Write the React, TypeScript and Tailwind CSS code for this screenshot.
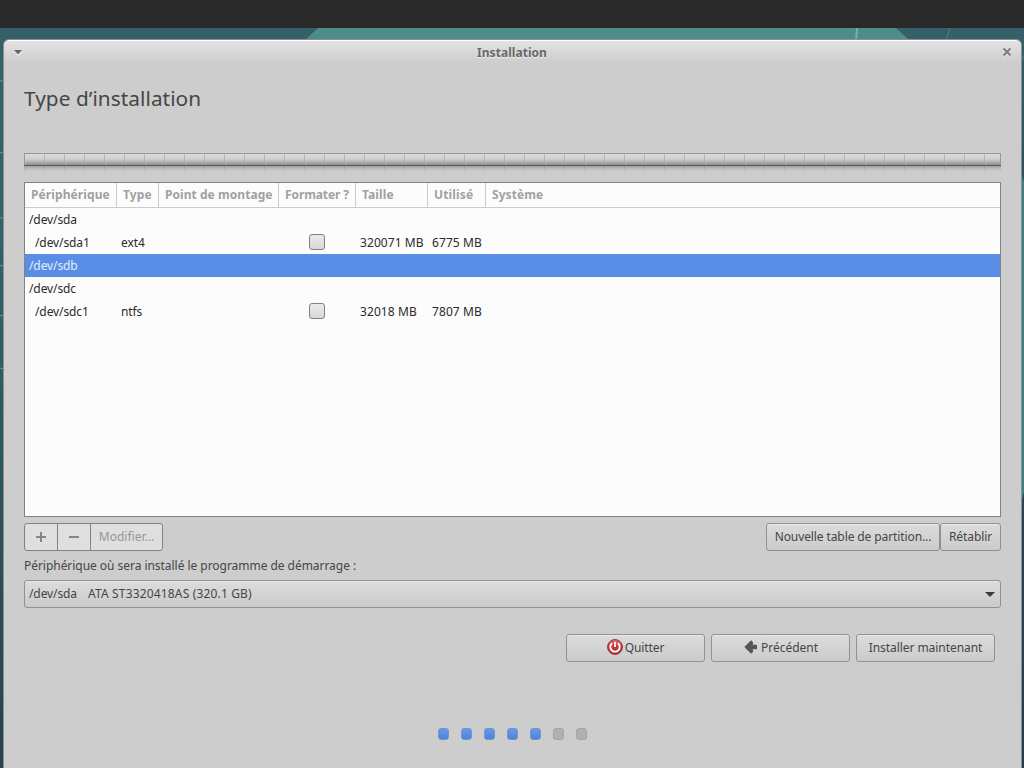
import React from 'react';

const columns = [
  { label: 'Périphérique', width: 'w-[92px]', tracking: 'tracking-[0.1px]' },
  { label: 'Type', width: 'w-[42px]', tracking: 'tracking-[0.1px]' },
  { label: 'Point de montage', width: 'w-[120px]', tracking: 'tracking-[0.05px]' },
  { label: 'Formater ?', width: 'w-[77px]', tracking: 'tracking-[-0.1px]' },
  { label: 'Taille', width: 'w-[72px]', tracking: 'tracking-[0.1px]' },
  { label: 'Utilisé', width: 'w-[58px]', tracking: 'tracking-[0.15px]' },
];

const rows = [
  { device: '/dev/sda' },
  { device: '/dev/sda1', type: 'ext4', size: '320071 MB', used: '6775 MB' },
  { device: '/dev/sdb', selected: true },
  { device: '/dev/sdc' },
  { device: '/dev/sdc1', type: 'ntfs', size: '32018 MB', used: '7807 MB' },
];

const steps = [true, true, true, true, true, false, false];

const Wallpaper: React.FC = () => (
  <svg className="absolute inset-0" width="1024" height="768" viewBox="0 0 1024 768">
    <defs>
      <linearGradient id="sea" x1="0" y1="0" x2="0" y2="1">
        <stop offset="0" stopColor="#366069" />
        <stop offset="0.35" stopColor="#30616a" />
        <stop offset="1" stopColor="#27434c" />
      </linearGradient>
      <linearGradient id="edge" x1="0" y1="0" x2="0" y2="1">
        <stop offset="0" stopColor="#366069" />
        <stop offset="0.25" stopColor="#2c4d5a" />
        <stop offset="1" stopColor="#263f4e" />
      </linearGradient>
    </defs>
    <rect width="1024" height="768" fill="url(#sea)" />
    <rect x="1021" y="28" width="3" height="740" fill="url(#edge)" />
    <path d="M318 28H896L910 41H304Z" fill="#4e8c8a" />
    <path d="M857 28L856 41" stroke="#73b0ae" strokeWidth="2" />
    <path d="M950 28L946 41M1022 60L1024 55" stroke="#4f7f85" />
    <path d="M1022 175L1024 182V492L1022 500Z" fill="#408080" />
    <path d="M0 81H4M0 153L4 152M0 218H4M0 266L4 265M0 316L4 315M0 368L4 369" stroke="#6d9a9c" />
  </svg>
);

const buttonClass =
  'flex h-7 items-center justify-center rounded-[3px] border border-[#919191] bg-linear-to-b from-[#dcdcdc] to-[#cbcbcb] shadow-[inset_0_1px_0_#e9e9e9]';

const DeviceTable: React.FC = () => (
  <div className="mt-[9px] h-[335px] border border-[#828282] bg-[#fcfcfc]">
    <div className="flex h-[25px] border-b border-[#cbcbcb] font-bold text-[#a1a1a1]">
      {columns.map((col) => (
        <div
          key={col.label}
          className={`${col.width} ${col.tracking} shrink-0 border-r border-[#cbcbcb] pl-1.5 leading-6 whitespace-nowrap`}
        >
          {col.label}
        </div>
      ))}
      <div className="pl-1.5 leading-6 tracking-[0.08px]">Système</div>
    </div>
    {rows.map((row) => (
      <div
        key={row.device}
        className={`flex h-[23px] leading-[23px] whitespace-nowrap ${row.selected ? 'bg-[#5a8ee6] text-[#e4ecfb]' : 'text-[#2b2b2b]'}`}
      >
        <div className={`w-24 shrink-0 tracking-[-0.1px] ${row.type ? 'pl-2.5' : 'pl-1'}`}>{row.device}</div>
        <div className="w-[188px] shrink-0 tracking-[-0.1px]">{row.type}</div>
        <div className="flex w-[55px] shrink-0 items-center">
          {row.type && (
            <span className="mb-px size-4 rounded-[3px] border border-[#808080] bg-linear-to-b from-[#eaeaea] to-[#d8d8d8]" />
          )}
        </div>
        <div className="-ml-1 w-[72px] shrink-0 tracking-[0.08px]">{row.size}</div>
        <div className="tracking-[0.08px]">{row.used}</div>
      </div>
    ))}
  </div>
);

const App: React.FC = () => {
  return (
    <div className="relative h-[768px] w-[1024px] overflow-hidden font-['Noto_Sans',sans-serif] text-[12px] text-[#464646]">
      <Wallpaper />
      <div className="relative h-7 bg-[#292929]" />

      <div className="relative mt-[11px] ml-[3px] h-[740px] w-[1019px] rounded-t-[6px] border border-[#8c8f8f] bg-[#cdcdcd] shadow-[inset_0_1px_0_#fff]">
        <div className="mt-px flex h-[22px] items-center justify-between rounded-t-[5px] bg-linear-to-b from-[#e3e3e3] to-[#cdcdcd] pr-[9px] pl-2.5">
          <svg className="mt-0.5" width="8" height="6" viewBox="0 0 8 6">
            <path d="M0 1H8L4 6Z" fill="#f4f4f4" />
            <path d="M0 0H8L4 4.5Z" fill="#666" />
          </svg>
          <span className="pt-0.5 font-bold tracking-[0.05px] text-[#686868] [text-shadow:0_1px_0_#eee]">Installation</span>
          <svg width="10" height="10" viewBox="0 0 10 10" fill="none">
            <path d="M1.5 2.5L8.5 9.5M8.5 2.5L1.5 9.5" stroke="#eee" strokeWidth="2" />
            <path d="M1.5 1.5L8.5 8.5M8.5 1.5L1.5 8.5" stroke="#7c7c7c" strokeWidth="2" />
          </svg>
        </div>

        <div className="w-[997px] pl-5">
          <h1 className="mt-5 h-[30px] text-[20.8px] leading-[30px] tracking-[0.05px] whitespace-nowrap">Type d’installation</h1>

          <div className="mt-10 flex h-5 w-full flex-col">
            <div className="h-px bg-[#999]" />
            <div className="h-[11px] border-x border-[#989898] bg-[repeating-linear-gradient(90deg,#e0e0e033_0_1px,transparent_1px_19px,#9998_19px_20px),linear-gradient(#dadada,#d0d0d0_45%,#8e8e8e)]" />
            <div className="h-px bg-[#5c5c5c]" />
            <div className="h-[7px] bg-[linear-gradient(#cdcdcd00,#cdcdcd),repeating-linear-gradient(90deg,#8886_0_1px,transparent_1px_20px),linear-gradient(#9c9c9c,#cdcdcd_90%)]" />
          </div>

          <DeviceTable />

          <div className="mt-1.5 flex">
            <div className="flex h-7 rounded-[3px] border border-[#828282] bg-[#dfdfdf] text-[#969696]">
              <div className="flex w-[33px] items-center justify-center border-r border-[#828282]">
                <svg width="10" height="10" viewBox="0 0 10 10" fill="#858585">
                  <path d="M4 0H6V4H10V6H6V10H4V6H0V4H4Z" />
                </svg>
              </div>
              <div className="flex w-[33px] items-center justify-center border-r border-[#828282]">
                <svg width="10" height="2">
                  <rect width="10" height="2" fill="#858585" />
                </svg>
              </div>
              <div className="w-[71px] text-center leading-[25px]">Modifier...</div>
            </div>
            <button className={`${buttonClass} ml-auto w-[174px] tracking-[-0.1px]`}>Nouvelle table de partition...</button>
            <button className={`${buttonClass} w-[61px] tracking-[-0.1px]`}>Rétablir</button>
          </div>

          <div className="mt-1.5 h-[18px] leading-[18px] tracking-[-0.04px]">Périphérique où sera installé le programme de démarrage :</div>

          <div className={`${buttonClass} mt-[5px] w-full pr-[5px] pl-1`}>
            <span className="w-[59px] tracking-[-0.1px]">/dev/sda</span>
            <span className="mr-auto tracking-[0.16px]">ATA ST3320418AS (320.1 GB)</span>
            <svg className="mt-px" width="10" height="5" viewBox="0 0 10 5">
              <path d="M0 0H10L5 5Z" fill="#3a3a3a" />
            </svg>
          </div>

          <div className="mt-[26px] flex justify-end gap-1.5 pr-1.5">
            <button className={`${buttonClass} w-[139px] tracking-[-0.1px]`}>
              <svg className="mr-0.5 mb-0.5" width="16" height="16" viewBox="0 0 16 16" fill="none">
                <defs>
                  <linearGradient id="quit" x1="0" y1="0" x2="0" y2="1">
                    <stop stopColor="#d77062" />
                    <stop offset="0.5" stopColor="#c73538" />
                    <stop offset="1" stopColor="#b42d42" />
                  </linearGradient>
                </defs>
                <circle cx="8" cy="8" r="7.5" fill="url(#quit)" stroke="#983f40" />
                <path d="M5.2 4.1A4.7 4.7 0 1 0 10.8 4.1M8 2.8V8" stroke="#fff" strokeWidth="1.8" />
              </svg>
              Quitter
            </button>
            <button className={`${buttonClass} w-[139px] pl-px`}>
              <svg className="mr-1 mb-0.5" width="13" height="14" viewBox="0 0 13 14">
                <path
                  d="M0.8 7L7 0.8L8.5 2V4L7.5 5.2H12.5V8.8H7.5L8.5 10V12L7 13.2Z"
                  fill="#555"
                  stroke="#555"
                  strokeWidth="1"
                  strokeLinejoin="round"
                />
              </svg>
              Précédent
            </button>
            <button className={`${buttonClass} w-[139px] tracking-[-0.06px]`}>Installer maintenant</button>
          </div>
        </div>

        <div className="mt-[66px] flex gap-3 pl-[434px]">
          {steps.map((done, idx) => (
            <span
              key={idx}
              className={`h-3 w-[11px] rounded-[3px] border ${done ? 'border-[#7794c6] bg-linear-to-b from-[#6798e8] to-[#4c83df]' : 'border-[#a4a4a4] bg-[#b1b1b1]'}`}
            />
          ))}
        </div>
      </div>
    </div>
  );
};

export default App;
